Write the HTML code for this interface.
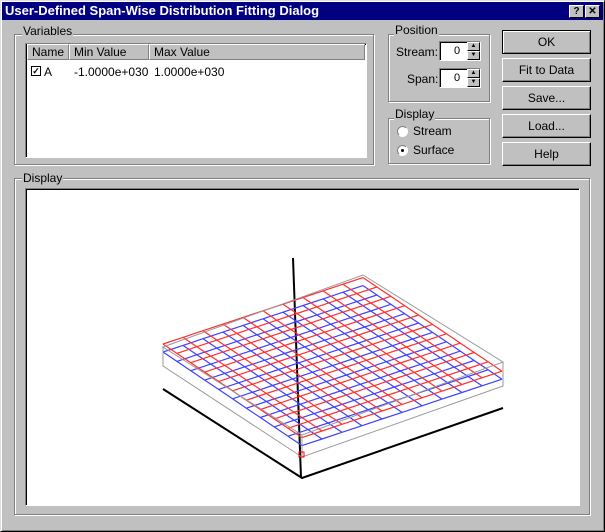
<!DOCTYPE html>
<html><head><style>
*{margin:0;padding:0;box-sizing:border-box}
body{width:605px;height:532px;background:#c0c0c0;font-family:"Liberation Sans",sans-serif;font-size:11px;color:#000;position:relative;overflow:hidden}
.abs{position:absolute}
.win{left:0;top:0;width:605px;height:532px;border:1px solid #dfdfdf;border-right-color:#000;border-bottom-color:#000;box-shadow:inset 1px 1px #fff,inset -1px -1px #808080}
.title{left:2px;top:2px;width:601px;height:18px;background:#000080;color:#fff;font-weight:bold;font-size:13px;line-height:18px;padding-left:3px}
.tb{top:5px;width:15px;height:13px;background:#c0c0c0;border:1px solid;border-color:#fff #000 #000 #fff;font-size:10px;font-weight:bold;color:#000;text-align:center;line-height:11px}
.grp{border:1px solid #808080;box-shadow:1px 1px #fff,inset 1px 1px #fff}
.lbl{background:#c0c0c0;padding:0 1px;line-height:12px;font-size:12px}
.sunk{border:1px solid;border-color:#808080 #fff #fff #808080;box-shadow:inset 1px 1px #000}
.btn{left:502px;width:89px;background:#c0c0c0;border:1px solid;border-color:#fff #000 #000 #fff;box-shadow:inset -1px -1px #808080;text-align:center;line-height:22px;height:24px;font-size:12px}
.hdr{top:0;height:16px;border:1px solid;border-color:#fff #808080 #808080 #fff;background:#c0c0c0;line-height:14px;padding-left:4px;font-size:12px}
.spin{width:42px;height:20px;background:#fff}
.arr{right:0;width:13px;height:9px;background:#c0c0c0;border:1px solid;border-color:#fff #000 #000 #fff;font-size:6px;line-height:7px;text-align:center}
.radio{width:11px;height:11px;border-radius:50%;background:#fff;border:1px solid;border-color:#808080 #fff #fff #808080}
</style></head><body>
<div class="abs win"></div>
<div class="abs title">User-Defined Span-Wise Distribution Fitting Dialog</div>
<div class="abs tb" style="left:569px">?</div>
<div class="abs tb" style="left:585px">✕</div>

<div class="abs grp" style="left:14px;top:34px;width:360px;height:131px"></div>
<div class="abs lbl" style="left:22px;top:25px">Variables</div>
<div class="abs sunk" style="left:25px;top:43px;width:342px;height:115px;background:#fff">
 <div class="abs hdr" style="left:1px;width:42px">Name</div>
 <div class="abs hdr" style="left:43px;width:80px">Min Value</div>
 <div class="abs hdr" style="left:123px;width:216px">Max Value</div>
 <div class="abs" style="left:5px;top:22px;width:10px;height:10px;border:1px solid #000;font-size:9px;line-height:8px;text-align:center;font-weight:bold">✓</div>
 <div class="abs" style="left:18px;top:21px;font-size:12px">A</div>
 <div class="abs" style="left:48px;top:21px;font-size:12px">-1.0000e+030</div>
 <div class="abs" style="left:128px;top:21px;font-size:12px">1.0000e+030</div>
</div>

<div class="abs grp" style="left:388px;top:34px;width:102px;height:68px"></div>
<div class="abs lbl" style="left:394px;top:24px">Position</div>
<div class="abs" style="left:396px;top:45px;font-size:12px">Stream:</div>
<div class="abs sunk spin" style="left:439px;top:41px"><div class="abs" style="left:14px;top:3px">0</div><div class="abs arr" style="top:0">▲</div><div class="abs arr" style="top:9px">▼</div></div>
<div class="abs" style="left:407px;top:72px;font-size:12px">Span:</div>
<div class="abs sunk spin" style="left:439px;top:68px"><div class="abs" style="left:14px;top:3px">0</div><div class="abs arr" style="top:0">▲</div><div class="abs arr" style="top:9px">▼</div></div>

<div class="abs grp" style="left:388px;top:118px;width:102px;height:46px"></div>
<div class="abs lbl" style="left:394px;top:108px">Display</div>
<div class="abs radio" style="left:397px;top:126px"></div>
<div class="abs" style="left:413px;top:124px;font-size:12px">Stream</div>
<div class="abs radio" style="left:397px;top:145px"><div class="abs" style="left:3px;top:3px;width:3px;height:3px;background:#000;border-radius:50%"></div></div>
<div class="abs" style="left:413px;top:143px;font-size:12px">Surface</div>

<div class="abs btn" style="top:30px;border-color:#000;box-shadow:inset 1px 1px #fff,inset -1px -1px #808080">OK</div>
<div class="abs btn" style="top:58px">Fit to Data</div>
<div class="abs btn" style="top:86px">Save...</div>
<div class="abs btn" style="top:114px">Load...</div>
<div class="abs btn" style="top:142px">Help</div>

<div class="abs grp" style="left:14px;top:178px;width:576px;height:337px"></div>
<div class="abs lbl" style="left:22px;top:172px">Display</div>
<div class="abs sunk" style="left:25px;top:188px;width:555px;height:318px;background:#fff"></div>
<svg class="abs" style="left:0;top:0" width="605" height="532">
 <g stroke="#000" stroke-width="2" fill="none">
  <line x1="293" y1="258" x2="301" y2="478"/>
  <polyline points="163,389 302,478 503,408"/>
 </g>
 <g id="grid"></g>
 <g stroke="#999" stroke-width="1" fill="none">
  <polygon points="163,347 363,275 503,362 302,435"/>
  <polyline points="163,347 163,366 302,457 503,386 503,362"/>
  <line x1="302" y1="435" x2="302" y2="457"/>
 </g>
 <rect x="299" y="452" width="5" height="5" fill="none" stroke="red"/>
</svg>
<script>
var g=document.getElementById('grid'),s='';
function P(u,v,dz){var L=[163,347],B=[363,275],F=[302,435];
var x=L[0]+(B[0]-L[0])*u+(F[0]-L[0])*v, y=L[1]+(B[1]-L[1])*u+(F[1]-L[1])*v;
return x.toFixed(1)+','+(y+dz+(u*0.4+v*0.4)*14).toFixed(1);}
function grid(col,off,n){for(var i=0;i<=n;i++){var a=[],b=[];for(var j=0;j<=n;j++){a.push(P(i/n,j/n,off));b.push(P(j/n,i/n,off));}
s+='<polyline fill="none" stroke="'+col+'" stroke-width="1.2" points="'+a.join(' ')+'"/><polyline fill="none" stroke="'+col+'" stroke-width="1.2" points="'+b.join(' ')+'"/>';}}
grid('#4040ff',5,10);grid('#ff3030',-3,10);
g.innerHTML=s;
</script>
</body></html>
